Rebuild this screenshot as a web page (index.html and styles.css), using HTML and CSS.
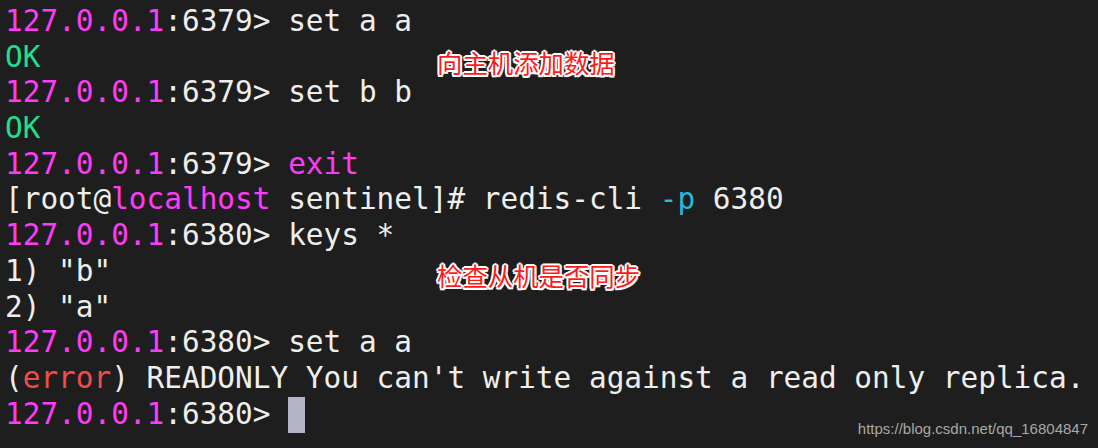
FILE: index.html
```html
<!DOCTYPE html>
<html lang="zh-CN">
<head>
<meta charset="utf-8">
<title>redis terminal</title>
<link rel="stylesheet" href="styles.css">
</head>
<body>
<div class="term">
<div class="line"><span class="m">127.0.0.1</span>:6379&gt; set a a</div>
<div class="line"><span class="g">OK</span></div>
<div class="line"><span class="m">127.0.0.1</span>:6379&gt; set b b</div>
<div class="line"><span class="g">OK</span></div>
<div class="line"><span class="m">127.0.0.1</span>:6379&gt; <span class="m">exit</span></div>
<div class="line">[root@<span class="m">localhost</span> sentinel]# redis-cli <span class="c">-p</span> 6380</div>
<div class="line"><span class="m">127.0.0.1</span>:6380&gt; keys *</div>
<div class="line">1) "b"</div>
<div class="line">2) "a"</div>
<div class="line"><span class="m">127.0.0.1</span>:6380&gt; set a a</div>
<div class="line">(<span class="r">error</span>) READONLY You can't write against a read only replica.</div>
<div class="line"><span class="m">127.0.0.1</span>:6380&gt; <span class="cursor"></span></div>
<div class="note note-1">向主机添加数据</div>
<div class="note note-2">检查从机是否同步</div>
<div class="mark">https://blog.csdn.net/qq_16804847</div>
</div>
</body>
</html>
```
FILE: styles.css
```css
html, body {
  margin: 0;
  padding: 0;
  background: #1e1e1e;
}
.term {
  position: relative;
  width: 1098px;
  height: 448px;
  box-sizing: border-box;
  padding: 4px 0 0 5px;
  background: #1e1e1e;
  color: #eeeeee;
  font-family: "DejaVu Sans Mono", monospace;
  font-size: 29.4px;
  line-height: 35.7px;
  overflow: hidden;
}
.line {
  height: 35.7px;
  white-space: pre;
}
.m { color: #ff3cf5; }
.g { color: #22dd8b; }
.c { color: #29b8db; }
.r { color: #f14c4c; }
.cursor {
  display: inline-block;
  width: 17px;
  height: 36px;
  background: #b4b4c6;
  vertical-align: top;
}
.note {
  position: absolute;
  font-family: "Noto Sans CJK SC", sans-serif;
  font-size: 25.4px;
  line-height: 30px;
  color: #ff1a1a;
  white-space: nowrap;
  text-shadow:
    -2px 0 0 #fff, 2px 0 0 #fff, 0 -2px 0 #fff, 0 2px 0 #fff,
    -1.5px -1.5px 0 #fff, 1.5px -1.5px 0 #fff, -1.5px 1.5px 0 #fff, 1.5px 1.5px 0 #fff;
}
.note-1 { left: 437px; top: 47px; }
.note-2 { left: 437px; top: 260px; }
.mark {
  position: absolute;
  right: 10px;
  top: 419px;
  font-family: "Liberation Sans", Arial, sans-serif;
  font-size: 15px;
  line-height: 20px;
  color: #a8a8a8;
}
```
